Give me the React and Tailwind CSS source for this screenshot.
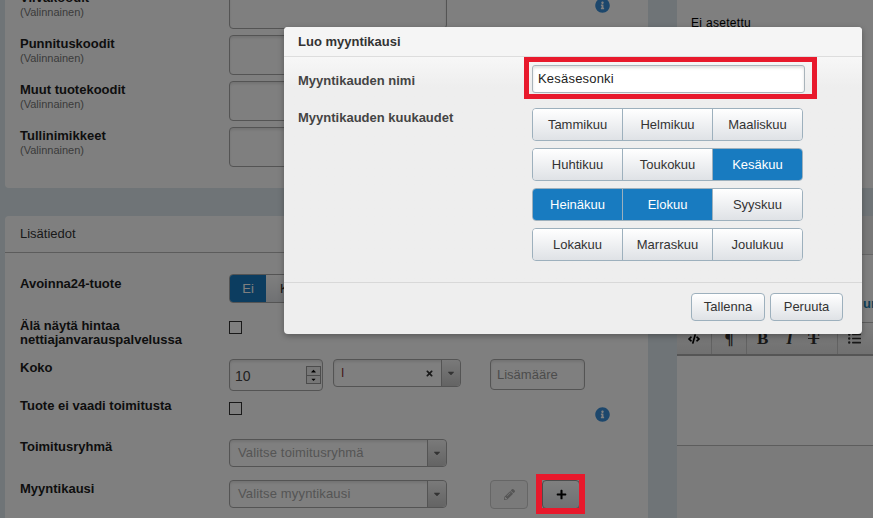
import { FaInfoCircle, FaPencilAlt, FaPlus, FaTimes, FaCaretDown, FaCaretUp, FaListUl, FaCode } from 'react-icons/fa';

const MONTHS = [
  [['Tammikuu'], ['Helmikuu'], ['Maaliskuu']],
  [['Huhtikuu'], ['Toukokuu'], ['Kesäkuu', true]],
  [['Heinäkuu', true], ['Elokuu', true], ['Syyskuu']],
  [['Lokakuu'], ['Marraskuu'], ['Joulukuu']],
];

const label = 'text-[13px] leading-[14px] font-bold text-[#1c1c1c]';
const field = 'rounded-[4px] border border-[#a8a8a8] bg-white shadow-[inset_0_2px_3px_rgba(0,0,0,0.1)]';
const btn = 'bg-gradient-to-b from-white to-[#dfe2e6] text-[13px] text-[#333]';

function CodeRow({ name }) {
  return (
    <div className="flex h-[40px]">
      <div className="w-[209px] pt-[2px]">
        <div className={label}>{name}</div>
        <div className="text-[11px] leading-[14px] text-[#777]">(Valinnainen)</div>
      </div>
      <div className={`${field} w-[218px]`} />
    </div>
  );
}

function Select({ text, className }) {
  return (
    <div className={`${field} flex h-[28px] w-[218px] items-center justify-between ${className || ''}`}>
      <span className="pl-[8px] text-[13px] tracking-[0.15px] text-[#aaa]">{text}</span>
      <span className="flex h-full w-[19px] items-center justify-center rounded-r-[4px] border-l border-[#a8a8a8] bg-gradient-to-b from-[#f4f4f4] to-[#c8c8c8] text-[10px] text-[#666]">
        <FaCaretDown />
      </span>
    </div>
  );
}

function Checkbox() {
  return <div className="h-[13px] w-[13px] border border-[#333] bg-white" />;
}

function Row({ title, className, children }) {
  return (
    <div className={`flex ${className}`}>
      <div className={`w-[209px] shrink-0 ${label}`}>{title}</div>
      {children}
    </div>
  );
}

function LeftColumn() {
  return (
    <div className="ml-[5px] w-[643px] shrink-0">
      <div className="relative -mt-[30px] flex flex-col gap-[6px] rounded-[4px] bg-white pb-[21px] pl-[15px] pt-[19px]">
        <CodeRow name="Viivakoodit" />
        <FaInfoCircle className="absolute left-[590px] top-[28px] text-[15px] text-[#3a8fd8]" />
        <CodeRow name="Punnituskoodit" />
        <CodeRow name="Muut tuotekoodit" />
        <CodeRow name="Tullinimikkeet" />
      </div>

      <div className="mt-[28px] h-[340px] rounded-[4px] bg-white">
        <div className="flex h-[37px] items-center border-b border-[#b8b8b8] pl-[15px] text-[13px] text-[#333]">Lisätiedot</div>
        <div className="pl-[15px]">
          <Row title="Avoinna24-tuote" className="mt-[21px] h-[29px] pt-[3px]">
            <div className="-mt-[3px] flex h-[29px] overflow-hidden rounded-[4px] border border-[#a8a8a8] text-[13px]">
              <span className="flex w-[36px] items-center justify-center bg-[#187bc0] text-white">Ei</span>
              <span className={`flex w-[60px] items-center pl-[14px] ${btn}`}>Kyllä</span>
            </div>
          </Row>
          <Row title={<>Älä näytä hintaa<br />nettiajanvarauspalvelussa</>} className="mt-[16px] h-[28px]">
            <div className="mt-[2px]"><Checkbox /></div>
          </Row>
          <Row title="Koko" className="mt-[12px] h-[32px] pt-[2px]">
            <div className="-mt-[2px] flex items-start">
              <div className={`${field} flex h-[32px] w-[94px] items-center justify-between pl-[5px] pr-[1px] text-[14px] text-[#444]`}>
                <span className="pt-[3px]">10</span>
                <span className="flex w-[15px] flex-col border border-[#999] bg-[#eee] text-[9px] text-black">
                  <FaCaretUp className="mx-auto h-[8px]" />
                  <FaCaretDown className="mx-auto h-[8px] w-full border-t border-[#999]" />
                </span>
              </div>
              <div className={`${field} ml-[10px] flex h-[28px] w-[128px] items-center justify-between`}>
                <span className="pl-[7px] text-[12px] text-[#833]">I</span>
                <span className="flex h-full items-center">
                  <FaTimes className="mr-[7px] text-[9px] text-[#333]" />
                  <span className="flex h-full w-[19px] items-center justify-center rounded-r-[4px] border-l border-[#a8a8a8] bg-gradient-to-b from-[#f4f4f4] to-[#c8c8c8] text-[10px] text-[#666]">
                    <FaCaretDown />
                  </span>
                </span>
              </div>
              <div className={`${field} ml-[29px] flex h-[31px] w-[95px] items-center pl-[6px] text-[13px] text-[#999]`}>Lisämääre</div>
            </div>
          </Row>
          <Row title={<span className="relative -top-[3px]">Tuote ei vaadi toimitusta</span>} className="mt-[11px] h-[14px]">
            <Checkbox />
            <FaInfoCircle className="ml-[353px] mt-[5px] shrink-0 text-[15px] text-[#3a8fd8]" />
          </Row>
          <Row title="Toimitusryhmä" className="mt-[23px] h-[28px] pt-[1px]">
            <Select text="Valitse toimitusryhmä" className="-mt-[1px]" />
          </Row>
          <Row title="Myyntikausi" className="mt-[13px] h-[29px] pt-[2px]">
            <Select text="Valitse myyntikausi" className="-mt-[2px]" />
            <div className="-mt-[2px] ml-[43px] flex h-[29px] w-[38px] items-center justify-center rounded-[4px] border border-[#ccc] bg-[#f4f4f4] text-[11px] text-[#aaa]">
              <FaPencilAlt />
            </div>
            <div className={`-mt-[2px] ml-[14px] flex h-[29px] w-[38px] items-center justify-center rounded-[4px] border border-[#999] ${btn}`}>
              <FaPlus className="text-[11px] text-black" />
            </div>
          </Row>
        </div>
      </div>
    </div>
  );
}

function RightColumn() {
  return (
    <div className="ml-[29px] flex-1">
      <div className="flex h-[188px] items-start bg-white pl-[14px] pt-[14px] text-[12px] tracking-[0.3px] text-black">Ei asetettu</div>
      <div className="mt-[28px] bg-white">
        <div className="h-[39px] border-b border-[#ccc] bg-[#f0f0f0]" />
        <div className="flex h-[68px] items-end justify-end border-b border-[#bbb] pb-[9px] text-[13px] font-bold text-[#1b7fae]">
          <span className="w-[10px] overflow-hidden">ur</span>
        </div>
        <div className="flex h-[33px] items-center border-b-2 border-[#aaa] bg-gradient-to-b from-[#fafafa] to-[#e2e2e2] text-[#333]">
          <span className="flex h-full w-[35px] items-center justify-center border-r border-[#c4c4c4] text-[12px] text-black"><FaCode /></span>
          <span className="flex h-full w-[35px] items-center justify-center border-r border-[#c4c4c4] font-['Liberation_Serif',serif] text-[17px] font-bold">¶</span>
          <span className="flex h-full w-[91px] items-center border-r border-[#c4c4c4] pl-[10px] font-['Liberation_Serif',serif] text-[17px] font-bold">
            <span>B</span>
            <span className="ml-[18px] italic">I</span>
            <span className="ml-[15px] line-through">T</span>
          </span>
          <FaListUl className="ml-[10px] text-[13px]" />
        </div>
        <div className="h-[90px] border-b border-[#bbb]" />
        <div className="h-[80px] bg-[#f6f6f6]" />
      </div>
    </div>
  );
}

function SaleSeasonModal() {
  return (
    <div className="absolute left-[284px] top-[27px] z-20 h-[307px] w-[578px] rounded-[4px] bg-[#eeeeee] shadow-[0_2px_6px_rgba(0,0,0,0.3)]">
      <div className="flex h-[30px] items-center rounded-t-[4px] border-b border-[#ddd] bg-[#f5f5f5] pl-[14px] pt-[1px] text-[13px] font-bold text-[#333]">Luo myyntikausi</div>
      <div className="flex h-[225px] bg-gradient-to-b from-[#f7f7f7] to-[#eeeeee] to-[30px]">
        <div className="w-[240px] pl-[14px] pt-[16px] text-[13px] font-bold text-[#444]">
          <div className="leading-[16px]">Myyntikauden nimi</div>
          <div className="mt-[21px] leading-[16px]">Myyntikauden kuukaudet</div>
        </div>
        <div>
          <div className="h-[42px] w-[293px] border-[5px] border-[#e8192c] pb-[1px] pl-[3px] pr-[7px] pt-[3px]">
            <div className="flex h-full items-center rounded-[3px] border border-[#a9b4bb] bg-white pl-[5px] text-[13px] tracking-[0.2px] text-[#222] shadow-[inset_0_2px_3px_rgba(0,0,0,0.12)]">Kesäsesonki</div>
          </div>
          <div className="ml-[8px] mt-[9px] flex w-[271px] flex-col gap-[7px]">
            {MONTHS.map((row, i) => (
              <div key={i} className="grid h-[33px] grid-cols-[89px_90px_90px] overflow-hidden rounded-[4px] border border-[#9db0bd]">
                {row.map(([name, active], j) => (
                  <div
                    key={name}
                    className={`flex items-center justify-center ${j > 0 ? 'border-l border-[#9db0bd]' : ''} ${active ? 'bg-[#187bc0] text-[13px] text-white' : btn}`}
                  >
                    {name}
                  </div>
                ))}
              </div>
            ))}
          </div>
        </div>
      </div>
      <div className="flex h-[52px] items-start justify-end gap-[5px] border-t border-[#d8d8d8] pr-[19px] pt-[10px]">
        <div className={`flex h-[28px] w-[74px] items-center justify-center rounded-[4px] border border-[#9db0bd] ${btn}`}>Tallenna</div>
        <div className={`flex h-[28px] w-[73px] items-center justify-center rounded-[4px] border border-[#9db0bd] ${btn}`}>Peruuta</div>
      </div>
    </div>
  );
}

export default function App() {
  return (
    <div className="relative h-[518px] w-[873px] overflow-hidden bg-[#dee9ee] font-['Liberation_Sans',Arial,sans-serif]">
      <div className="flex">
        <LeftColumn />
        <RightColumn />
      </div>
      <div className="absolute inset-0 z-10 bg-black/50" />
      <SaleSeasonModal />
      {/* red annotation around the add button */}
      <div className="absolute left-[536px] top-[474px] z-20 h-[40px] w-[49px] border-[6px] border-[#e8192c]" />
    </div>
  );
}
